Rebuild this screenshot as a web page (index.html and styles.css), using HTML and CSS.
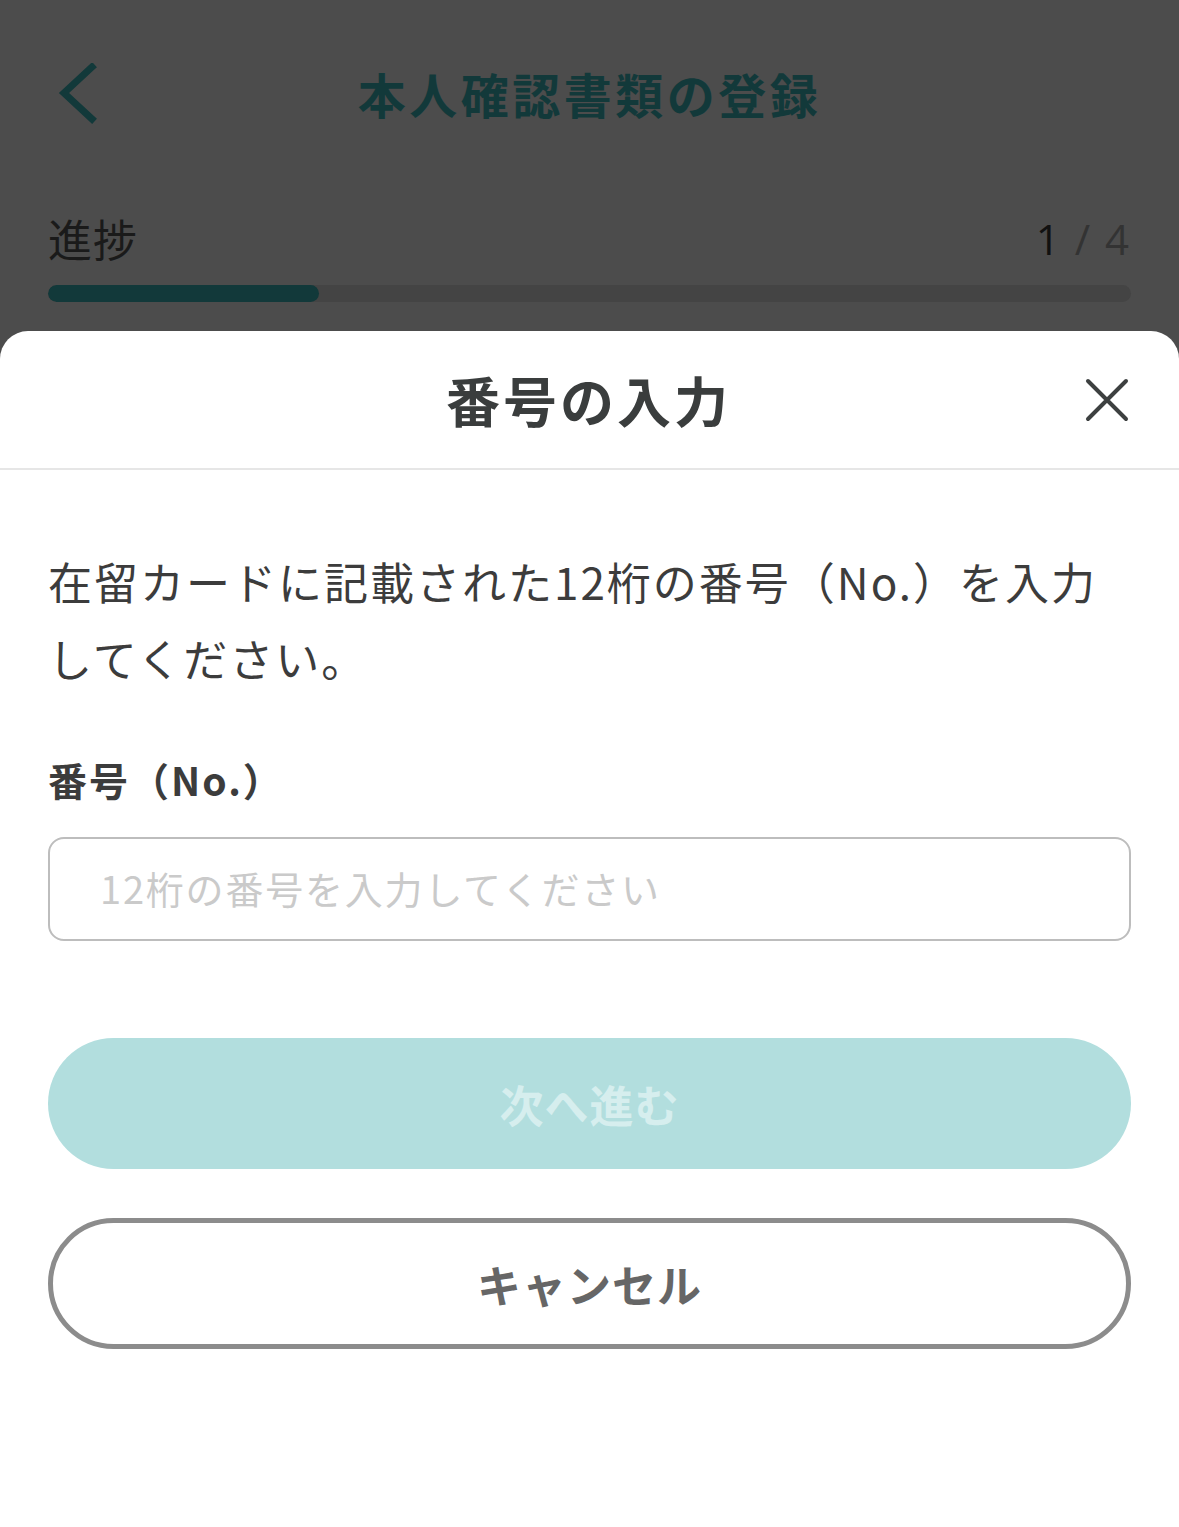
FILE: index.html
```html
<!DOCTYPE html>
<html lang="ja">
<head>
<meta charset="utf-8">
<meta name="viewport" content="width=device-width, initial-scale=1">
<title>番号の入力</title>
<link rel="stylesheet" href="styles.css">
</head>
<body>
  <header class="topbar">
    <a class="back" href="#" aria-label="戻る">
      <svg width="48" height="64" viewBox="0 0 48 64">
        <polyline points="34,4 6,30 34,56" fill="none" stroke="#12393a" stroke-width="7" stroke-linecap="square"/>
      </svg>
    </a>
    <h1 class="page-title">本人確認書類の登録</h1>
    <span></span>
  </header>

  <section class="progress">
    <div class="progress-row">
      <span class="progress-label">進捗</span>
      <span class="progress-count"><b>1</b> / 4</span>
    </div>
    <div class="track"><div class="fill" style="width:25%"></div></div>
  </section>

  <main class="sheet">
    <div class="sheet-head">
      <span></span>
      <h2 class="sheet-title">番号の入力</h2>
      <button class="close" aria-label="閉じる">
        <svg width="44" height="44" viewBox="0 0 44 44">
          <path d="M3 3 L41 41 M41 3 L3 41" stroke="#3d4040" stroke-width="4" stroke-linecap="round"/>
        </svg>
      </button>
    </div>

    <div class="sheet-body">
      <p class="lead">在留カードに記載された12桁の番号（No.）を入力してください。</p>
      <label class="field-label" for="cardNo">番号（No.）</label>
      <input id="cardNo" class="field" type="text" placeholder="12桁の番号を入力してください">
      <button class="btn btn-primary" disabled>次へ進む</button>
      <button class="btn btn-outline">キャンセル</button>
    </div>
  </main>
</body>
</html>
```

FILE: styles.css
```css
* {
  box-sizing: border-box;
}
body {
  margin: 0;
  min-height: 1527px;
  display: flex;
  flex-direction: column;
  background: #4c4c4c;
  font-family: "Noto Sans CJK JP", "Noto Sans", sans-serif;
  color: #3c3c3c;
}

/* dimmed page behind the sheet */
.topbar {
  display: grid;
  grid-template-columns: 140px 1fr 140px;
  align-items: center;
  height: 96px;
  margin-top: 45px;
  padding: 0 48px;
}
.back {
  display: flex;
  align-items: center;
  padding-left: 10px;
  margin-top: 4px;
}
.page-title {
  margin: 0;
  text-align: center;
  font-size: 48px;
  font-weight: 700;
  color: #12393a;
  letter-spacing: 3.5px;
}

.progress {
  padding: 0 48px;
  margin-top: 67px;
}
.progress-row {
  display: flex;
  justify-content: space-between;
  align-items: center;
  height: 60px;
}
.progress-label {
  font-size: 44px;
  letter-spacing: 1px;
  color: #1a1a1a;
}
.progress-count {
  font-family: "Open Sans", "Noto Sans", sans-serif;
  font-size: 42px;
  letter-spacing: 2px;
  color: #333;
}
.progress-count b {
  font-weight: 400;
  color: #111;
}
.track {
  height: 17px;
  margin-top: 17px;
  border-radius: 9px;
  background: #444;
  overflow: hidden;
}
.fill {
  height: 100%;
  border-radius: 9px;
  background: #12393a;
}

/* bottom sheet */
.sheet {
  flex: 1;
  margin-top: 29px;
  background: #fff;
  border-radius: 28px 28px 0 0;
}
.sheet-head {
  display: grid;
  grid-template-columns: 1fr auto 1fr;
  align-items: center;
  height: 139px;
  padding: 0 50px 0 48px;
  border-bottom: 2px solid #e6e6e6;
}
.sheet-title {
  margin: 0;
  font-size: 54px;
  font-weight: 700;
  color: #3a3d3d;
  letter-spacing: 3px;
}
.close {
  justify-self: end;
  display: flex;
  padding: 0;
  border: 0;
  background: none;
}

.sheet-body {
  display: flex;
  flex-direction: column;
  padding: 0 48px;
}
.lead {
  margin: 73px 0 0;
  font-size: 44px;
  line-height: 77px;
  letter-spacing: 2px;
  color: #3c3c3c;
}
.field-label {
  margin-top: 57px;
  font-size: 39px;
  line-height: 50px;
  font-weight: 700;
  letter-spacing: 2px;
  color: #3c3c3c;
}
.field {
  height: 104px;
  margin-top: 33px;
  padding: 0 0 4px 50px;
  border: 2px solid #bdbdbd;
  border-radius: 16px;
  font-family: inherit;
  font-size: 38px;
  letter-spacing: 1.8px;
  color: #333;
  outline: none;
}
.field::placeholder {
  color: #cacaca;
}

.btn {
  height: 131px;
  border-radius: 66px;
  font-family: inherit;
  font-size: 44px;
  font-weight: 700;
  letter-spacing: 1px;
}
.btn-primary {
  margin-top: 97px;
  border: 0;
  background: #b2dede;
  color: #d6eeee;
}
.btn-outline {
  margin-top: 49px;
  border: 5px solid #8c8c8c;
  background: #fff;
  color: #666;
}
```
